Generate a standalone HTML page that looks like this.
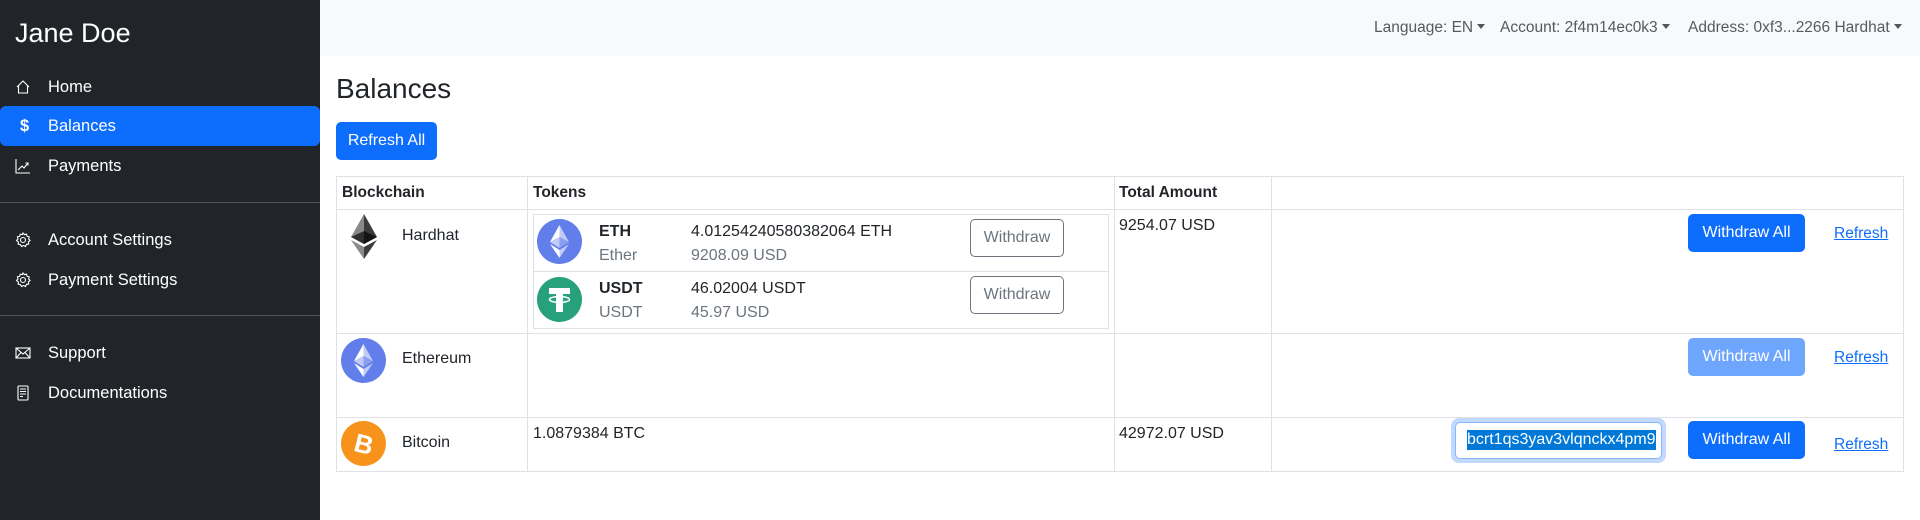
<!DOCTYPE html>
<html><head><meta charset="utf-8"><style>
*{box-sizing:border-box;margin:0;padding:0}
body{width:1920px;height:520px;overflow:hidden;background:#fff;font-family:"Liberation Sans",sans-serif;font-size:16px;color:#212529;position:relative}
.a{position:absolute;white-space:nowrap}
#side{position:absolute;left:0;top:0;width:320px;height:520px;background:#212529;color:#fff}
.nav{position:absolute;left:0;width:320px;height:40px;line-height:40px;font-size:16.5px}
.nav span{position:absolute;left:48px}
.nav svg{position:absolute;left:15px;top:12px}
.hr{position:absolute;left:0;width:320px;height:1px;background:#50545a}
#top{position:absolute;left:320px;top:0;width:1600px;height:56px;background:#f8f9fa}
.dd{font-size:15.5px;color:#555b61}
.car{display:inline-block;width:0;height:0;border-left:4px solid transparent;border-right:4px solid transparent;border-top:5px solid #555;vertical-align:3px;margin-left:4px}
.btn{position:absolute;background:#0d6efd;color:#fff;border-radius:5px;text-align:center;font-size:16px}
.ob{position:absolute;border:1px solid #6c757d;border-radius:5px;color:#6c757d;text-align:center;font-size:16px;width:94px;height:38px;line-height:36px}
.ln{position:absolute;background:#dee2e6}
.lk{position:absolute;color:#0d6efd;text-decoration:underline;font-size:15.5px}
</style></head><body>
<div id="side">
<div class="a" style="left:15px;top:18px;font-size:27px">Jane Doe</div>
<div class="nav" style="top:67px"><svg width="16" height="16" viewBox="0 0 16 16" fill="none" stroke="#fff" stroke-width="1.1"><path d="M2 8 L8 2 L14 8 M3.5 6.5 V14 H12.5 V6.5"/></svg><span>Home</span></div>
<div class="nav" style="top:106px;background:#0d6efd;border-radius:6px"><span style="left:20px;font-weight:bold">$</span><span>Balances</span></div>
<div class="nav" style="top:146px"><svg width="16" height="16" viewBox="0 0 16 16" fill="none" stroke="#fff" stroke-width="1.1"><path d="M1 1 V15 H15 M3 12 L7 8 L9 10 L13 5 M10.5 5 H13 V7.5"/></svg><span>Payments</span></div>
<div class="hr" style="top:202px"></div>
<div class="nav" style="top:220px"><svg width="16" height="16" viewBox="0 0 16 16" fill="none" stroke="#fff" stroke-width="1.1"><circle cx="8" cy="8" r="2.5"/><path d="M8 1 L9.5 2.6 L11.6 2.2 L12 4.3 L14.2 4.9 L13.6 7 L15 8.5 L13.4 9.9 L13.7 12 L11.6 12.3 L10.5 14.5 L8.5 13.5 L6.5 14.5 L5.4 12.6 L3.2 12.2 L3.4 10 L1.5 8.5 L3 7 L2.4 4.9 L4.6 4.3 L5.3 2.2 L7.3 2.6 Z"/></svg><span>Account Settings</span></div>
<div class="nav" style="top:260px"><svg width="16" height="16" viewBox="0 0 16 16" fill="none" stroke="#fff" stroke-width="1.1"><circle cx="8" cy="8" r="2.5"/><path d="M8 1 L9.5 2.6 L11.6 2.2 L12 4.3 L14.2 4.9 L13.6 7 L15 8.5 L13.4 9.9 L13.7 12 L11.6 12.3 L10.5 14.5 L8.5 13.5 L6.5 14.5 L5.4 12.6 L3.2 12.2 L3.4 10 L1.5 8.5 L3 7 L2.4 4.9 L4.6 4.3 L5.3 2.2 L7.3 2.6 Z"/></svg><span>Payment Settings</span></div>
<div class="hr" style="top:315px"></div>
<div class="nav" style="top:333px"><svg width="16" height="16" viewBox="0 0 16 16" fill="none" stroke="#fff" stroke-width="1.1"><rect x="1" y="3" width="14" height="10"/><path d="M1 3 L8 9 L15 3 M1 13 L6 7.5 M15 13 L10 7.5"/></svg><span>Support</span></div>
<div class="nav" style="top:373px"><svg width="16" height="16" viewBox="0 0 16 16" fill="none" stroke="#fff" stroke-width="1.1"><rect x="3" y="1" width="10" height="14" rx="1"/><path d="M5 4 H11 M5 6.5 H11 M5 9 H11 M5 11.5 H8"/></svg><span>Documentations</span></div>
</div>
<div id="top">
<div class="a dd" style="left:1054px;top:19px">Language: EN<span class="car"></span></div>
<div class="a dd" style="left:1180px;top:19px">Account: 2f4m14ec0k3<span class="car"></span></div>
<div class="a dd" style="left:1368px;top:19px">Address: 0xf3...2266 Hardhat<span class="car"></span></div>
</div>
<div class="a" style="left:336px;top:73px;font-size:28px">Balances</div>
<div class="btn" style="left:336px;top:122px;width:101px;height:38px;line-height:38px">Refresh All</div>

<div class="ln" style="left:336px;top:176px;width:1568px;height:1px"></div>
<div class="ln" style="left:336px;top:209px;width:1568px;height:1px"></div>
<div class="ln" style="left:336px;top:333px;width:1568px;height:1px"></div>
<div class="ln" style="left:336px;top:417px;width:1568px;height:1px"></div>
<div class="ln" style="left:336px;top:471px;width:1568px;height:1px"></div>
<div class="ln" style="left:336px;top:176px;width:1px;height:296px"></div>
<div class="ln" style="left:527px;top:176px;width:1px;height:296px"></div>
<div class="ln" style="left:1114px;top:176px;width:1px;height:296px"></div>
<div class="ln" style="left:1271px;top:176px;width:1px;height:296px"></div>
<div class="ln" style="left:1903px;top:176px;width:1px;height:296px"></div>
<div class="a" style="left:342px;top:184px;font-weight:bold;font-size:15.5px">Blockchain</div>
<div class="a" style="left:533px;top:184px;font-weight:bold;font-size:15.5px">Tokens</div>
<div class="a" style="left:1119px;top:184px;font-weight:bold;font-size:15.5px">Total Amount</div>

<svg class="a" style="left:349px;top:214px" width="30" height="45" viewBox="0 0 30 45"><path d="M15 0 L2 23 L15 30 Z" fill="#8a8a8a"/><path d="M15 0 L28 23 L15 30 Z" fill="#3c3c3b"/><path d="M2 23 L15 17 L15 30Z" fill="#2f2f2f"/><path d="M28 23 L15 17 L15 30Z" fill="#141414"/><path d="M2 26 L15 45 L15 33 Z" fill="#8a8a8a"/><path d="M28 26 L15 45 L15 33 Z" fill="#3c3c3b"/></svg>
<div class="a" style="left:402px;top:227px;font-size:16px">Hardhat</div>
<div class="a" style="left:533px;top:214px;width:576px;height:115px;border:1px solid #dee2e6"></div>
<div class="ln" style="left:533px;top:271px;width:576px;height:1px"></div>
<svg class="a" style="left:537px;top:219px" width="45" height="45" viewBox="0 0 45 45"><circle cx="22.5" cy="22.5" r="22.5" fill="#627eea"/><path d="M22.5 6 V18 L32 23 Z" fill="#fff" opacity=".6"/><path d="M22.5 6 L13 23 L22.5 18Z" fill="#fff"/><path d="M22.5 18 L32 23 L22.5 29Z" fill="#fff" opacity=".25"/><path d="M22.5 18 L13 23 L22.5 29Z" fill="#fff" opacity=".6"/><path d="M22.5 31 L32 25 L22.5 39Z" fill="#fff" opacity=".6"/><path d="M22.5 31 L13 25 L22.5 39Z" fill="#fff"/></svg>
<div class="a" style="left:599px;top:223px;font-weight:bold">ETH</div>
<div class="a" style="left:599px;top:247px;color:#6c757d">Ether</div>
<div class="a" style="left:691px;top:223px">4.01254240580382064 ETH</div>
<div class="a" style="left:691px;top:247px;color:#6c757d">9208.09 USD</div>
<div class="ob" style="left:970px;top:219px">Withdraw</div>
<svg class="a" style="left:537px;top:277px" width="45" height="45" viewBox="0 0 45 45"><circle cx="22.5" cy="22.5" r="22.5" fill="#26a17b"/><path d="M12 11 H33 V17 H26 V35 H19 V17 H12Z" fill="#fff"/><ellipse cx="22.5" cy="22.5" rx="10" ry="3" fill="none" stroke="#fff" stroke-width="1.5"/></svg>
<div class="a" style="left:599px;top:280px;font-weight:bold">USDT</div>
<div class="a" style="left:599px;top:304px;color:#6c757d">USDT</div>
<div class="a" style="left:691px;top:280px">46.02004 USDT</div>
<div class="a" style="left:691px;top:304px;color:#6c757d">45.97 USD</div>
<div class="ob" style="left:970px;top:276px">Withdraw</div>
<div class="a" style="left:1119px;top:217px">9254.07 USD</div>
<div class="btn" style="left:1688px;top:214px;width:117px;height:38px;line-height:38px">Withdraw All</div>
<div class="lk" style="left:1834px;top:225px">Refresh</div>

<svg class="a" style="left:341px;top:338px" width="45" height="45" viewBox="0 0 45 45"><circle cx="22.5" cy="22.5" r="22.5" fill="#627eea"/><path d="M22.5 6 V18 L32 23 Z" fill="#fff" opacity=".6"/><path d="M22.5 6 L13 23 L22.5 18Z" fill="#fff"/><path d="M22.5 18 L32 23 L22.5 29Z" fill="#fff" opacity=".25"/><path d="M22.5 18 L13 23 L22.5 29Z" fill="#fff" opacity=".6"/><path d="M22.5 31 L32 25 L22.5 39Z" fill="#fff" opacity=".6"/><path d="M22.5 31 L13 25 L22.5 39Z" fill="#fff"/></svg>
<div class="a" style="left:402px;top:350px">Ethereum</div>
<div class="btn" style="left:1688px;top:338px;width:117px;height:38px;line-height:38px;background:#6ea5fd">Withdraw All</div>
<div class="lk" style="left:1834px;top:349px">Refresh</div>

<svg class="a" style="left:341px;top:421px" width="45" height="45" viewBox="0 0 45 45"><circle cx="22.5" cy="22.5" r="22.5" fill="#f7931a"/><text x="23" y="32" text-anchor="middle" font-family="Liberation Sans" font-weight="bold" font-size="26" fill="#fff" transform="rotate(14 22.5 22.5)">B</text></svg>
<div class="a" style="left:402px;top:434px">Bitcoin</div>
<div class="a" style="left:533px;top:425px">1.0879384 BTC</div>
<div class="a" style="left:1119px;top:425px">42972.07 USD</div>
<div class="a" style="left:1451px;top:418px;width:215px;height:45px;border-radius:8px;background:#c2d9fd"></div>
<div class="a" style="left:1455px;top:422px;width:207px;height:37px;border-radius:5px;background:#fff;border:1px solid #86b7fe;overflow:hidden"><span style="position:absolute;left:11px;top:7px;background:#0078d7;color:#fff;font-size:16px;line-height:20px">bcrt1qs3yav3vlqnckx4pm9</span></div>
<div class="btn" style="left:1688px;top:421px;width:117px;height:38px;line-height:38px">Withdraw All</div>
<div class="lk" style="left:1834px;top:436px">Refresh</div>
</body></html>
